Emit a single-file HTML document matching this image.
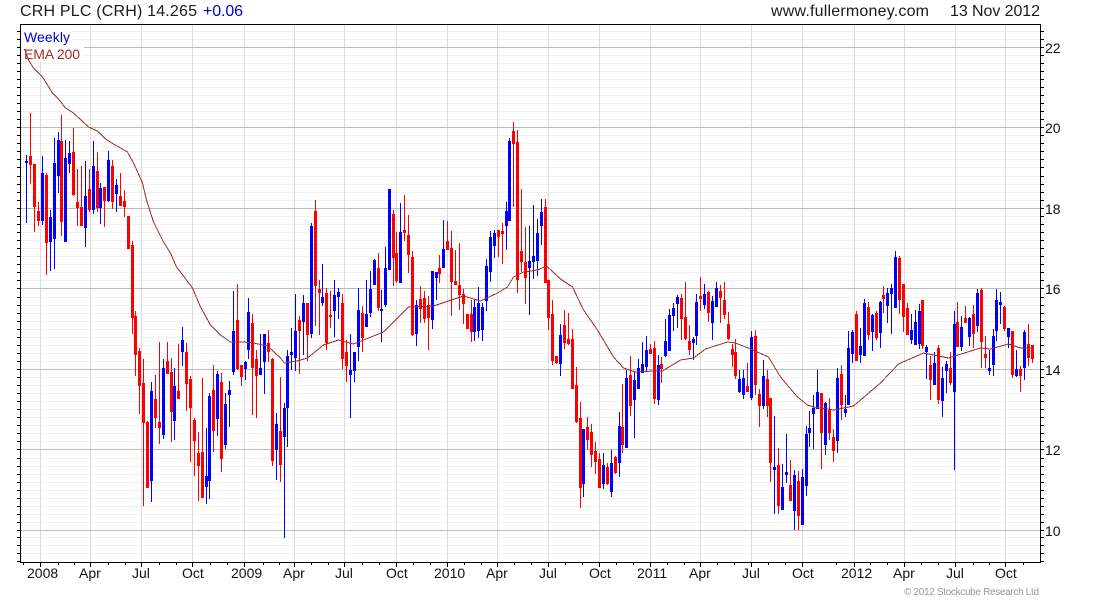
<!DOCTYPE html>
<html><head><meta charset="utf-8"><title>CRH PLC</title>
<style>html,body{margin:0;padding:0;background:#fff;overflow:hidden}svg{display:block;font-family:"Liberation Sans",Arial,sans-serif}</style></head>
<body>
<svg width="1100" height="600" viewBox="0 0 1100 600" xmlns="http://www.w3.org/2000/svg">
<rect width="1100" height="600" fill="#fff"/>
<g transform="translate(0,.5)" shape-rendering="crispEdges" fill="none">
<path stroke="#f0f0f0" d="M21 31H1040M21 39H1040M21 55H1040M21 63H1040M21 71H1040M21 79H1040M21 87H1040M21 95H1040M21 103H1040M21 111H1040M21 119H1040M21 135H1040M21 143H1040M21 151H1040M21 159H1040M21 167H1040M21 176H1040M21 184H1040M21 192H1040M21 200H1040M21 216H1040M21 224H1040M21 232H1040M21 240H1040M21 248H1040M21 256H1040M21 264H1040M21 272H1040M21 280H1040M21 297H1040M21 305H1040M21 313H1040M21 321H1040M21 329H1040M21 337H1040M21 345H1040M21 353H1040M21 361H1040M21 377H1040M21 385H1040M21 393H1040M21 401H1040M21 409H1040M21 417H1040M21 425H1040M21 433H1040M21 441H1040M21 458H1040M21 466H1040M21 474H1040M21 482H1040M21 490H1040M21 498H1040M21 506H1040M21 514H1040M21 522H1040M21 537H1040M21 545H1040M21 553H1040"/>
</g>
<g transform="translate(.5,0)" shape-rendering="crispEdges" fill="none">
<path stroke="#dcdcdc" d="M40 25V562M90 25V562M141 25V562M192 25V562M244 25V562M294 25V562M344 25V562M396 25V562M447 25V562M497 25V562M548 25V562M599 25V562M650 25V562M700 25V562M751 25V562M802 25V562M854 25V562M904 25V562M955 25V562M1005 25V562"/>
</g>
<g transform="translate(0,.5)" shape-rendering="crispEdges" fill="none">
<path stroke="#bcbcbc" d="M21 47H1040M21 127H1040M21 208H1040M21 288H1040M21 369H1040M21 449H1040M21 530H1040"/>
</g>
<rect x="21" y="25" width="50" height="22" fill="#fff"/>
<rect x="21" y="47" width="63" height="14" fill="#fff"/>
<g transform="translate(0,.5)" shape-rendering="crispEdges" fill="none" stroke="#000">
<path id="t" d="M17 31h3M17 39h3M17 47h3M17 55h3M17 63h3M17 71h3M17 79h3M17 87h3M17 95h3M17 103h3M17 111h3M17 119h3M17 127h3M17 135h3M17 143h3M17 151h3M17 159h3M17 167h3M17 176h3M17 184h3M17 192h3M17 200h3M17 208h3M17 216h3M17 224h3M17 232h3M17 240h3M17 248h3M17 256h3M17 264h3M17 272h3M17 280h3M17 288h3M17 297h3M17 305h3M17 313h3M17 321h3M17 329h3M17 337h3M17 345h3M17 353h3M17 361h3M17 369h3M17 377h3M17 385h3M17 393h3M17 401h3M17 409h3M17 417h3M17 425h3M17 433h3M17 441h3M17 449h3M17 458h3M17 466h3M17 474h3M17 482h3M17 490h3M17 498h3M17 506h3M17 514h3M17 522h3M17 530h3M17 537h3M17 545h3M17 553h3M17 561h3"/>
<use href="#t" x="1024"/>
</g>
<g transform="translate(.5,0)" shape-rendering="crispEdges" fill="none" stroke="#000">
<path d="M23 563v2M58 563v2M74 563v2M108 563v2M125 563v2M159 563v2M176 563v2M210 563v2M227 563v2M263 563v2M279 563v2M311 563v2M328 563v2M362 563v2M379 563v2M413 563v2M430 563v2M464 563v2M481 563v2M514 563v2M531 563v2M565 563v2M582 563v2M616 563v2M633 563v2M667 563v2M684 563v2M717 563v2M734 563v2M768 563v2M785 563v2M836 563v2M870 563v2M887 563v2M921 563v2M938 563v2M973 563v2M989 563v2M1023 563v2"/>
<path d="M40 563v4M90 563v4M141 563v4M192 563v4M244 563v4M294 563v4M344 563v4M396 563v4M447 563v4M497 563v4M548 563v4M599 563v4M650 563v4M700 563v4M751 563v4M802 563v4M854 563v4M904 563v4M955 563v4M1005 563v4"/>
<!-- blue wicks -->
<path stroke="#0000ff" d="M26 155V223M42 156V225M50 210V271M54 138V269M58 132V193M65 140V242M69 141V173M85 161V247M93 141V214M100 183V224M108 151V202M116 179V212M151 382V502M163 359V439M174 368V440M182 327V366M206 428V504M209 393V499M217 371V436M225 393V449M229 381V427M233 291V375M245 361V380M248 298V359M260 334V375M264 334V394M276 413V480M284 403V538M287 350V447M291 328V370M295 294V371M303 295V355M311 223V338M322 264V306M334 280V337M338 288V319M350 334V418M354 352V382M358 288V361M366 280V327M370 271V317M374 259V285M381 290V342M385 247V307M389 189V270M400 203V283M416 300V346M432 271V329M436 272V300M443 220V268M474 300V341M478 287V338M482 303V341M486 259V311M490 231V282M494 230V258M506 202V250M509 138V221M529 226V315M533 205V279M537 219V276M541 199V245M560 324V376M583 429V497M603 453V489M611 450V497M619 412V477M626 370V448M634 372V438M638 359V389M642 342V373M646 336V372M658 355V405M665 319V357M669 309V351M673 303V331M677 295V328M693 337V360M696 294V345M704 284V309M712 296V340M716 282V307M739 370V393M743 370V399M751 331V400M763 360V409M774 416V514M782 464V510M786 434V483M794 470V530M802 469V525M806 426V496M809 411V447M813 395V449M817 370V409M825 402V455M837 368V453M845 395V417M848 331V405M852 330V363M860 328V363M864 299V356M872 314V351M880 301V348M887 288V323M891 284V334M895 251V308M911 314V344M915 310V345M919 304V349M926 345V379M934 352V385M942 367V417M946 361V393M954 311V470M961 316V351M969 317V346M977 289V332M989 350V375M993 329V376M996 289V341M1000 292V324M1008 328V348M1016 350V377M1024 330V380"/>
<!-- blue bodies -->
<path stroke="#0000ff" stroke-width="3" d="M26 161V163M42 173V221M50 217V242M54 163V239M58 140V176M65 158V242M69 153V164M85 196V228M93 166V210M100 188V208M108 160V201M116 185V194M151 391V481M163 368V435M174 386V421M182 340V352M206 476V487M209 396V481M217 374V419M225 404V445M229 390V395M233 331V372M245 362V369M248 312V350M260 368V375M264 334V362M276 424V450M284 408V437M287 356V408M291 352V355M295 331V358M303 303V322M311 226V334M322 297V303M334 295V311M338 292V297M350 370V375M354 352V371M358 310V347M366 314V327M370 289V313M374 260V285M381 309V311M385 268V305M389 189V270M400 232V283M416 305V334M432 271V320M436 272V278M443 249V268M474 307V332M478 303V331M482 307V330M486 266V301M490 237V272M494 233V246M506 211V226M509 141V221M529 261V268M533 256V262M537 233V261M541 212V226M560 335V364M583 429V484M603 465V484M611 463V492M619 426V463M626 378V448M634 380V400M638 368V389M642 364V373M646 350V367M658 365V400M665 341V356M669 315V351M673 308V316M677 297V304M693 339V343M696 302V336M704 294V305M712 301V323M716 288V307M739 379V392M743 378V395M751 337V398M763 376V406M774 467V470M782 487V510M786 472V475M794 475V511M802 477V525M806 434V486M809 428V433M813 408V414M817 392V409M825 403V445M837 378V441M845 409V413M848 348V405M852 332V354M860 346V355M864 303V356M872 315V332M880 302V333M887 293V306M891 288V294M895 257V308M911 330V340M915 322V345M919 311V344M926 347V352M934 363V385M942 378V401M946 364V371M954 324V392M961 327V347M969 318V337M977 293V326M989 368V371M993 336V365M996 300V331M1000 302V305M1008 328V337M1016 369V376M1024 332V368"/>
<!-- red wicks -->
<path stroke="#ff0000" d="M30 113V184M34 164V232M38 202V226M46 173V275M61 115V236M73 128V196M77 169V226M81 166V226M89 169V212M97 152V212M104 187V227M112 160V209M120 173V206M124 190V217M128 216V249M132 241V334M135 311V376M139 348V414M143 359V506M147 421V488M155 375V428M159 342V444M167 342V374M171 358V442M178 344V399M186 343V411M190 376V462M194 418V476M198 432V501M202 378V498M213 365V452M221 373V472M237 284V370M241 365V386M252 314V415M256 350V418M268 330V362M272 358V466M280 377V482M299 316V374M307 303V361M315 200V326M319 280V335M326 288V350M330 291V328M342 294V369M346 340V382M362 306V352M378 253V311M393 210V286M396 232V283M404 195V241M408 215V273M412 251V336M420 286V323M424 291V323M428 296V350M439 255V283M447 221V250M451 231V316M455 250V285M459 243V310M463 289V324M467 314V329M471 300V342M498 230V257M502 223V264M513 122V207M517 130V293M521 189V272M525 227V304M545 199V283M548 280V330M552 300V365M556 356V364M564 310V349M568 313V345M572 329V389M576 367V423M580 402V508M587 417V450M591 424V467M595 442V474M599 453V488M607 463V485M615 456V474M622 384V453M630 356V416M650 344V354M654 341V404M661 357V383M681 294V340M685 282V340M689 325V355M700 277V311M708 291V322M720 285V323M724 282V319M728 312V340M732 344V367M735 339V379M747 363V392M755 330V395M759 389V427M767 370V417M770 398V482M778 448V514M790 460V501M798 471V530M821 393V469M829 398V440M833 429V462M841 365V420M856 311V361M868 302V340M876 311V340M883 286V313M899 256V314M903 284V332M907 303V335M922 300V349M930 356V400M938 345V404M950 352V385M957 302V347M965 306V323M973 305V348M981 288V368M985 336V368M1004 306V331M1012 331V378M1020 366V392M1028 324V366M1032 345V363"/>
<!-- red bodies -->
<path stroke="#ff0000" stroke-width="3" d="M30 156V165M34 164V207M38 211V221M46 175V243M61 141V222M73 152V195M77 202V208M81 207V226M89 189V210M97 171V208M104 187V201M112 166V202M120 196V206M124 201V207M128 216V249M132 245V318M135 316V355M139 351V386M143 383V423M147 422V488M155 399V418M159 422V428M167 361V374M171 372V412M178 391V399M186 352V384M190 379V408M194 420V441M198 453V466M202 452V498M213 390V431M221 382V459M237 320V369M241 365V377M252 323V368M256 359V376M268 343V352M272 359V461M280 431V465M299 320V331M307 303V335M315 211V286M319 289V293M326 293V343M330 315V317M342 303V359M346 352V366M362 313V338M378 268V308M393 214V258M396 253V281M404 230V233M408 235V255M412 257V335M420 299V309M424 298V319M428 305V318M439 268V274M447 241V250M451 248V282M455 281V285M459 285V295M463 294V304M467 314V329M471 314V332M498 230V237M502 231V234M513 131V144M517 142V280M521 251V262M525 262V278M545 207V283M548 280V318M552 314V361M556 356V363M564 325V343M568 339V344M572 339V389M576 385V422M580 418V488M587 427V440M591 432V455M595 451V462M599 459V488M607 467V484M615 457V473M622 427V445M630 375V406M650 349V354M654 348V399M661 364V369M681 298V319M685 317V339M689 341V350M700 296V299M708 292V313M720 291V298M724 300V315M728 324V339M732 349V355M735 352V376M747 386V392M755 336V385M759 394V406M767 379V406M770 398V463M778 465V506M790 485V501M798 481V516M821 393V433M829 410V433M833 437V451M841 374V405M856 314V361M868 307V335M876 313V338M883 295V299M899 258V300M903 284V317M907 308V335M922 300V346M930 365V380M938 348V400M950 368V383M957 322V347M965 318V323M973 314V334M981 290V342M985 354V358M1004 307V329M1012 331V375M1020 369V376M1028 344V358M1032 345V359"/>
<polyline stroke="#a52a2a" points="24,49 28,60 33,68 42,77 52,93 58,99 65,108 73,113 88,127 97,131 105,139 113,144 127,152 133,163 142,183 146,200 153,222 163,242 170,253 176,267 183,276 192,288 200,307 210,325 220,335 230,342 243,342 253,343 267,346 280,358 284,363 297,361 307,358 323,345 338,340 353,344 383,332 408,307 433,306 463,296 480,301 497,293 507,287 513,277 523,272 537,270 546,266 560,279 572,287 583,310 597,330 613,357 623,368 635,372 653,371 662,371 680,360 693,358 705,349 727,342 735,343 750,349 768,357 780,377 797,397 807,405 813,407 833,410 853,406 880,383 898,364 923,353 948,358 980,348 990,349 1008,344 1020,348 1032,348"/>
</g>
<rect x="20.5" y="24.5" width="1020" height="538" fill="none" stroke="#000" shape-rendering="crispEdges"/>
<g font-size="16" fill="#1a1a1a">
<text x="20" y="16" textLength="177">CRH PLC (CRH) 14.265</text>
<text x="203" y="16" textLength="40" fill="#0000cc">+0.06</text>
<text x="771" y="16" textLength="158">www.fullermoney.com</text>
<text x="950" y="16" textLength="90">13 Nov 2012</text>
</g>
<text x="24" y="42" font-size="14" textLength="46" fill="#0000cc">Weekly</text>
<text x="24" y="59" font-size="14" textLength="56" fill="#a52a2a">EMA 200</text>
<g font-size="14" fill="#111">
<text x="1045" y="53">22</text><text x="1045" y="133">20</text><text x="1045" y="214">18</text><text x="1045" y="294">16</text><text x="1045" y="375">14</text><text x="1045" y="455">12</text><text x="1045" y="536">10</text>
<text x="27" y="578">2008</text><text x="79" y="578">Apr</text><text x="132" y="578">Jul</text><text x="182" y="578">Oct</text>
<text x="231" y="578">2009</text><text x="283" y="578">Apr</text><text x="335" y="578">Jul</text><text x="386" y="578">Oct</text>
<text x="434" y="578">2010</text><text x="486" y="578">Apr</text><text x="539" y="578">Jul</text><text x="589" y="578">Oct</text>
<text x="637" y="578">2011</text><text x="689" y="578">Apr</text><text x="742" y="578">Jul</text><text x="792" y="578">Oct</text>
<text x="841" y="578">2012</text><text x="893" y="578">Apr</text><text x="946" y="578">Jul</text><text x="995" y="578">Oct</text>
</g>
<text x="904" y="595" font-size="10" textLength="135" fill="#999">© 2012 Stockcube Research Ltd</text>
</svg>
</body></html>
